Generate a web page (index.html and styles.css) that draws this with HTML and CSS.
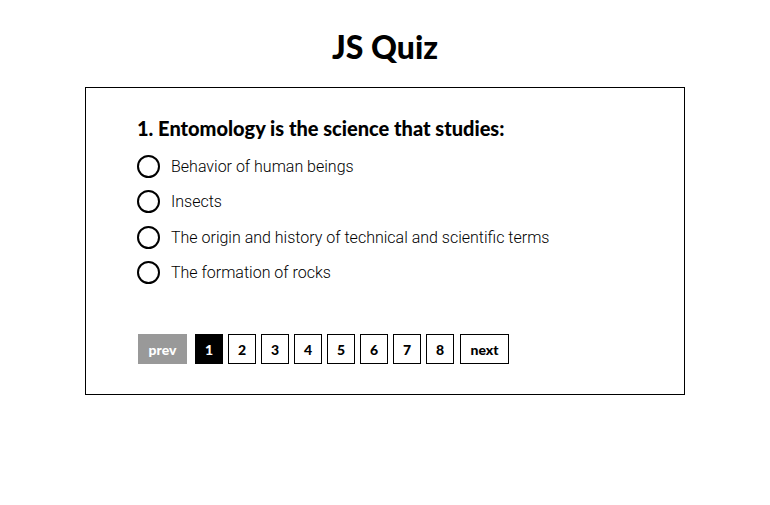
FILE: index.html
```html
<!DOCTYPE html>
<html lang="en">
<head>
<meta charset="utf-8">
<title>JS Quiz</title>
<link rel="stylesheet" href="styles.css">
</head>
<body>
<h1 class="title">JS Quiz</h1>
<div class="card">
  <h2 class="question">1. Entomology is the science that studies:</h2>
  <ul class="options">
    <li class="option"><span class="radio"></span><span class="label">Behavior of human beings</span></li>
    <li class="option"><span class="radio"></span><span class="label">Insects</span></li>
    <li class="option"><span class="radio"></span><span class="label">The origin and history of technical and scientific terms</span></li>
    <li class="option"><span class="radio"></span><span class="label">The formation of rocks</span></li>
  </ul>
  <div class="pager">
    <button class="btn btn-wide btn-disabled">prev</button>
    <div class="pages">
      <button class="btn btn-active">1</button>
      <button class="btn">2</button>
      <button class="btn">3</button>
      <button class="btn">4</button>
      <button class="btn">5</button>
      <button class="btn">6</button>
      <button class="btn">7</button>
      <button class="btn">8</button>
    </div>
    <button class="btn btn-wide btn-next">next</button>
  </div>
</div>
</body>
</html>
```

FILE: styles.css
```css
* { box-sizing: border-box; }
html, body { margin: 0; padding: 0; background: #fff; }
body {
  font-family: "Lato", "Liberation Sans", sans-serif;
  color: #000;
}
.title {
  margin: 0;
  padding-top: 28px;
  height: 87px;
  text-align: center;
  font-family: "Lato", sans-serif;
  font-weight: 900;
  font-size: 32px;
  line-height: 38px;
}
.card {
  width: 600px;
  height: 308px;
  margin: 0 auto;
  border: 1px solid #000;
  padding: 28px 50px 0 51px;
}
.question {
  margin: 0 0 9px;
  font-family: "Lato", sans-serif;
  font-weight: 900;
  font-size: 20px;
  line-height: 24px;
}
.options {
  list-style: none;
  margin: 0;
  padding: 0;
}
.option {
  display: flex;
  align-items: center;
  height: 35.3px;
}
.radio {
  width: 23px;
  height: 23px;
  border: 2px solid #000;
  border-radius: 50%;
  flex: none;
}
.label {
  margin-left: 11px;
  font-family: "Roboto", sans-serif;
  font-weight: 300;
  font-size: 16px;
}
.pager {
  display: flex;
  margin-top: 44px;
  margin-left: 1px;
  gap: 8px;
}
.pages {
  display: flex;
  gap: 5px;
}
.btn {
  height: 30px;
  min-width: 28px;
  padding: 0 6px;
  border: 1px solid #000;
  background: #fff;
  color: #000;
  font-family: "Lato", sans-serif;
  font-weight: 900;
  font-size: 14px;
  display: flex;
  align-items: center;
  justify-content: center;
  margin: 0;
}
.btn-wide { width: 49px; }
.btn-next { margin-left: -2px; }
.btn-active { background: #000; color: #fff; }
.btn-disabled { background: #999; border-color: #999; color: #fff; }
```
